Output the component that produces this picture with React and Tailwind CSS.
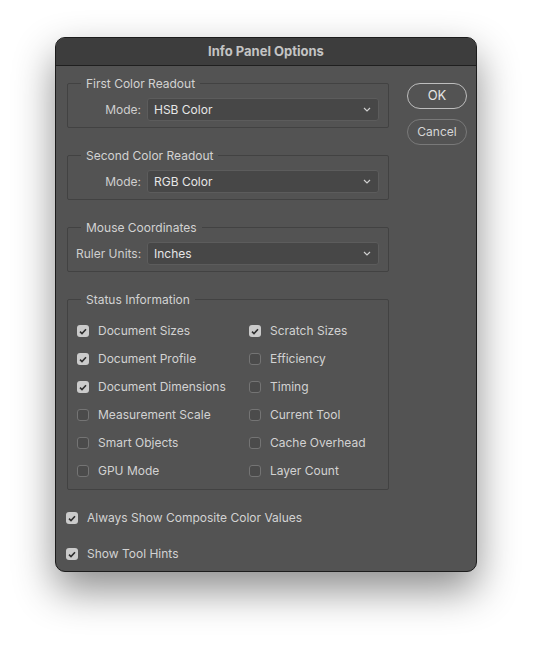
import React from "react";

const font = { fontFamily: "Inter, 'Liberation Sans', sans-serif" };

function Chevron() {
  return (
    <svg width="8" height="5" viewBox="0 0 8 5" className="text-[#cfcfcf]">
      <path d="M1 1 L4 4 L7 1" fill="none" stroke="currentColor" strokeWidth="1.2" />
    </svg>
  );
}

function Select(props) {
  return (
    <div className="flex items-center justify-between w-[232px] h-[23px] rounded-[3px] bg-[#474747] border border-[#5c5c5c] pl-[6px] pr-[7px] text-[12px] text-[#e6e6e6]">
      <span>{props.value}</span>
      <Chevron />
    </div>
  );
}

function Group(props) {
  return (
    <fieldset className="border border-[#424242] rounded-[2px] pl-[8px] pr-[9px] pb-[6px]">
      <legend className="ml-[5px] px-[5px] text-[12px] leading-[15px] text-[#d2d2d2]">
        {props.title}
      </legend>
      {props.children}
    </fieldset>
  );
}

function SelectRow(props) {
  return (
    <div className="flex items-center mt-[7px]">
      <span className="w-[65px] text-right text-[12px] text-[#cfcfcf] whitespace-nowrap">
        {props.label}
      </span>
      <div className="ml-[6px]">
        <Select value={props.value} />
      </div>
    </div>
  );
}

function Checkbox(props) {
  if (props.checked) {
    return (
      <div className="w-[12px] h-[12px] rounded-[3px] bg-[#cbcbcb] flex items-center justify-center shrink-0">
        <svg width="8" height="7" viewBox="0 0 8 7">
          <path d="M1 3.6 L3 5.5 L7 1.2" fill="none" stroke="#2e2e2e" strokeWidth="1.6" />
        </svg>
      </div>
    );
  }
  return (
    <div className="w-[12px] h-[12px] rounded-[3px] bg-[#4b4b4b] border border-[#747474] shrink-0"></div>
  );
}

function Check(props) {
  return (
    <div className="flex items-center h-[28px] gap-[9px] text-[12px] text-[#d2d2d2] whitespace-nowrap">
      <Checkbox checked={props.checked} />
      <span>{props.label}</span>
    </div>
  );
}

const status = [
  ["Document Sizes", true, "Scratch Sizes", true],
  ["Document Profile", true, "Efficiency", false],
  ["Document Dimensions", true, "Timing", false],
  ["Measurement Scale", false, "Current Tool", false],
  ["Smart Objects", false, "Cache Overhead", false],
  ["GPU Mode", false, "Layer Count", false],
];

export default function App() {
  return (
    <div className="w-[533px] h-[646px] bg-white pt-[37px] pl-[55px]" style={font}>
      <div className="w-[422px] h-[535px] rounded-[10px] bg-[#535353] border border-[#1c1c1c] overflow-hidden shadow-[0_18px_40px_rgba(0,0,0,0.45)] flex flex-col">
        <div className="h-[28px] bg-[#3d3d3d] border-b border-[#1f1f1f] flex items-center justify-center text-[13px] font-bold text-[#c4c4c4]">
          Info Panel Options
        </div>

        <div className="flex pl-[11px] pt-[10px]">
          <div className="w-[322px] flex flex-col gap-[20px]">
            <Group title="First Color Readout">
              <SelectRow label="Mode:" value="HSB Color" />
            </Group>
            <Group title="Second Color Readout">
              <SelectRow label="Mode:" value="RGB Color" />
            </Group>
            <Group title="Mouse Coordinates">
              <SelectRow label="Ruler Units:" value="Inches" />
            </Group>
            <fieldset className="border border-[#424242] rounded-[2px] pl-[9px] pb-[4px]">
              <legend className="ml-[4px] px-[5px] text-[12px] leading-[15px] text-[#d2d2d2]">
                Status Information
              </legend>
              <div className="grid grid-cols-[172px_1fr] mt-[10px]">
                {status.map((r) => (
                  <React.Fragment key={r[0]}>
                    <Check label={r[0]} checked={r[1]} />
                    <Check label={r[2]} checked={r[3]} />
                  </React.Fragment>
                ))}
              </div>
            </fieldset>
          </div>

          <div className="ml-[18px] pt-[7px] flex flex-col gap-[10px]">
            <button className="w-[60px] h-[26px] rounded-full border border-[#bdbdbd] text-[13px] text-[#e4e4e4]">
              OK
            </button>
            <button className="w-[60px] h-[26px] rounded-full border border-[#797979] text-[12px] text-[#d6d6d6]">
              Cancel
            </button>
          </div>
        </div>

        <div className="pl-[10px] mt-[14px] flex flex-col gap-[8px]">
          <Check label="Always Show Composite Color Values" checked={true} />
          <Check label="Show Tool Hints" checked={true} />
        </div>
      </div>
    </div>
  );
}
